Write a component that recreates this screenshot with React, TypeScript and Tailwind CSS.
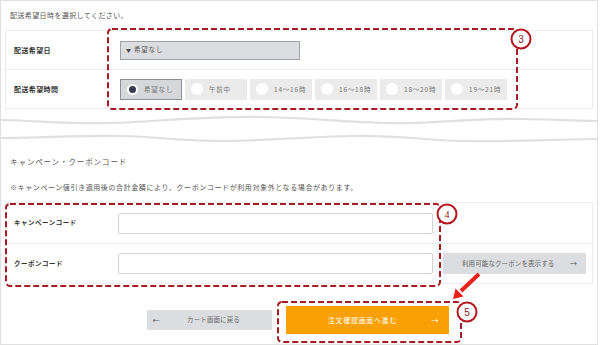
import React from "react";

const jp = "font-['Noto_Sans_CJK_JP',sans-serif]";

function Radio({ label, selected }: { label: string; selected?: boolean }) {
  return (
    <div
      className={
        "flex items-center w-[62px] h-[21px] pl-[6px] gap-[6px] " +
        (selected ? "bg-[#d6d7db] border border-[#8d9099]" : "bg-[#ebebeb]")
      }
    >
      {selected ? (
        <span className="flex items-center justify-center w-[11px] h-[11px] rounded-full bg-white">
          <span className="w-[7px] h-[7px] rounded-full bg-[#363b50]" />
        </span>
      ) : (
        <span className="w-[12px] h-[12px] rounded-full bg-white" />
      )}
      <span className="text-[6.5px] tracking-[0.8px] text-[#777] leading-none">{label}</span>
    </div>
  );
}

export default function App() {
  return (
    <div className={"relative w-[601px] h-[345px] bg-white overflow-hidden " + jp}>
      <div className="w-[598px] h-[345px] border border-[#e0e0e0] flex flex-col">
        <div className="h-[29px] pt-[9px] pl-[9px] text-[7px] leading-[10px] tracking-[0.4px] text-[#555]">
          配送希望日時を選択してください。
        </div>

        {/* table 1 */}
        <div className="ml-[4px] w-[588px] border border-[#ececec] flex flex-col">
          <div className="flex items-center h-[39px] border-b border-[#ececec]">
            <div className="w-[114px] pl-[8px] text-[7px] font-bold tracking-[0.4px] text-[#333]">配送希望日</div>
            <div className="flex items-center w-[180px] h-[19px] bg-[#dcdde1] border border-[#a0a2a8] pl-[5px] gap-[3px]">
              <span className="text-[5px] text-[#444]">▼</span>
              <span className="text-[6.5px] tracking-[0.8px] text-[#555]">希望なし</span>
            </div>
          </div>
          <div className="flex items-center h-[38px]">
            <div className="w-[114px] pl-[8px] text-[7px] font-bold tracking-[0.4px] text-[#333]">配送希望時間</div>
            <div className="flex gap-[3px]">
              <Radio label="希望なし" selected />
              <Radio label="午前中" />
              <Radio label="14〜16時" />
              <Radio label="16〜18時" />
              <Radio label="18〜20時" />
              <Radio label="19〜21時" />
            </div>
          </div>
        </div>

        {/* wave */}
        <svg width="596" height="36" viewBox="0 0 596 36" className="block">
          <path
            d="M0 11 C 40 12, 70 15, 110 14 S 200 7, 260 8 S 360 15, 410 14 S 470 9, 520 10 S 580 12, 600 12"
            stroke="#e0e0e0"
            strokeWidth="2.2"
            fill="none"
          />
          <path
            d="M0 29 C 40 29, 80 26, 120 27 S 180 32, 220 32 S 300 28, 350 27 S 420 31, 460 32 S 560 30, 600 30"
            stroke="#e0e0e0"
            strokeWidth="2.2"
            fill="none"
          />
        </svg>

        <div className="mt-[11px] pl-[9px] text-[7.5px] leading-[12px] tracking-[0.9px] text-[#555]">
          キャンペーン・クーポンコード
        </div>
        <div className="mt-[14px] pl-[9px] text-[7px] leading-[10px] tracking-[0.6px] text-[#555]">
          ※キャンペーン値引き適用後の合計金額により、クーポンコードが利用対象外となる場合があります。
        </div>

        {/* table 2 */}
        <div className="mt-[10px] ml-[4px] w-[588px] border border-[#ececec] flex flex-col">
          <div className="flex items-center h-[41px] border-b border-[#ececec]">
            <div className="w-[112px] pl-[8px] text-[6.5px] font-bold tracking-[0.5px] text-[#333]">キャンペーンコード</div>
            <div className="w-[315px] h-[21px] border border-[#d4d4d4] rounded-[2px] bg-white" />
          </div>
          <div className="flex items-center h-[39px]">
            <div className="w-[112px] pl-[8px] text-[6.5px] font-bold tracking-[0.5px] text-[#333]">クーポンコード</div>
            <div className="w-[315px] h-[21px] border border-[#d4d4d4] rounded-[2px] bg-white" />
            <div className="ml-[10px] flex items-center w-[143px] h-[21px] bg-[#dcdde1] pl-[19px] pr-[9px] justify-between">
              <span className="text-[6.5px] tracking-[0.1px] text-[#666]">利用可能なクーポンを表示する</span>
              <span className="text-[7px] text-[#555]">→</span>
            </div>
          </div>
        </div>

        {/* buttons */}
        <div className="mt-[22px] flex items-center justify-center gap-[14px] pr-[3px]">
          <div className="flex items-center w-[125px] h-[20px] bg-[#dcdde1] pl-[6px]">
            <span className="text-[7px] text-[#555]">←</span>
            <span className="flex-1 text-center pr-[4px] text-[6.5px] tracking-[0.1px] text-[#666]">カート画面に戻る</span>
          </div>
          <div className="flex items-center w-[163px] h-[28px] bg-[#f9a005] pr-[10px]">
            <span className="flex-1 text-center pl-[8px] text-[7px] tracking-[0.7px] text-white">注文確認画面へ進む</span>
            <span className="text-[7px] text-white">→</span>
          </div>
        </div>
      </div>

      {/* annotation overlay */}
      <svg
        width="601"
        height="345"
        viewBox="0 0 601 345"
        className="absolute left-0 top-0 pointer-events-none"
      >
        <g fill="none" stroke="#a51d24" strokeWidth="2" strokeDasharray="6 3">
          <rect x="108" y="29" width="409" height="80" rx="4" />
          <rect x="6" y="204" width="434" height="82" rx="4" />
          <rect x="278" y="302" width="183" height="40" rx="4" />
        </g>
        <line x1="479" y1="274" x2="461" y2="291" stroke="#e8221b" strokeWidth="4" />
        <polygon points="453,299 463.5,296.5 455.5,288.5" fill="#e8221b" />
        <g>
          <circle cx="521" cy="39" r="9.5" fill="#fff" stroke="#b5161e" strokeWidth="2" />
          <text x="521" y="42.5" textAnchor="middle" fontSize="10" fill="#8b1a1a" fontFamily="Liberation Sans, sans-serif">3</text>
          <circle cx="447" cy="214" r="9.5" fill="#fff" stroke="#b5161e" strokeWidth="2" />
          <text x="447" y="217.5" textAnchor="middle" fontSize="10" fill="#8b1a1a" fontFamily="Liberation Serif, serif">4</text>
          <circle cx="467" cy="312" r="9.5" fill="#fff" stroke="#b5161e" strokeWidth="2" />
          <text x="467" y="315.5" textAnchor="middle" fontSize="10" fill="#8b1a1a" fontFamily="Liberation Sans, sans-serif">5</text>
        </g>
      </svg>
    </div>
  );
}
